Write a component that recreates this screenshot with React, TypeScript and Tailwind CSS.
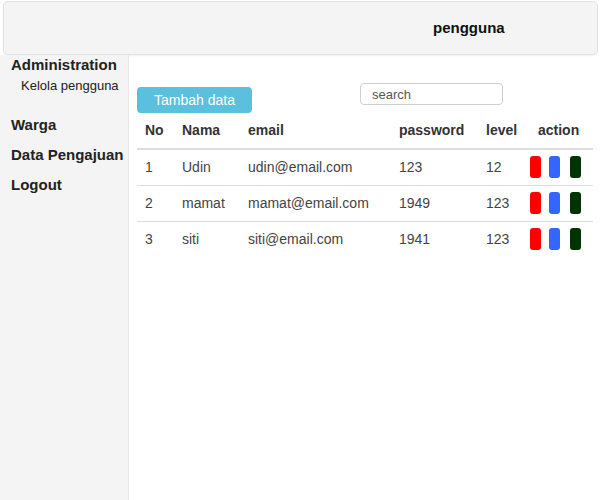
import React from 'react'

interface Pengguna {
  no: number
  nama: string
  email: string
  password: string
  level: string
}

const rows: Pengguna[] = [
  { no: 1, nama: 'Udin', email: 'udin@email.com', password: '123', level: '12' },
  { no: 2, nama: 'mamat', email: 'mamat@email.com', password: '1949', level: '123' },
  { no: 3, nama: 'siti', email: 'siti@email.com', password: '1941', level: '123' },
]

const App: React.FC = () => {
  return (
    <div className="w-[600px] h-[500px] bg-white flex flex-col font-['Liberation_Sans',Arial,sans-serif] text-[#222]">
      <header className="mt-px ml-[3px] mr-[2px] h-[54px] shrink-0 rounded-[5px] border border-[#e2e2e2] bg-[#f4f4f4] shadow-[0_1px_2px_rgba(0,0,0,0.06)] flex items-center">
        <div className="ml-[429px] text-[15px] font-bold text-[#111]">pengguna</div>
      </header>

      <div className="flex flex-1">
        <aside className="w-[129px] shrink-0 bg-[#f4f4f4] border-r border-[#e9e9e9]">
          <div className="pl-[11px] text-[15px] font-bold leading-[20px]">Administration</div>
          <div className="pl-[21px] text-[13px] leading-[20px] mt-px">Kelola pengguna</div>
          <div className="pl-[11px] text-[15px] font-bold leading-[20px] mt-[19px]">Warga</div>
          <div className="pl-[11px] text-[15px] font-bold leading-[20px] mt-[10px]">Data Pengajuan</div>
          <div className="pl-[11px] text-[15px] font-bold leading-[20px] mt-[10px]">Logout</div>
        </aside>

        <main className="flex-1 pl-[8px] pr-[7px]">
          <div className="flex items-start mt-[28px]">
            <button className="mt-[4px] h-[26px] w-[115px] rounded-[4px] bg-[#5bc0de] text-white text-[14px]">
              Tambah data
            </button>
            <input
              placeholder="search"
              className="ml-[108px] h-[22px] w-[143px] rounded-[4px] border border-[#cfcfcf] px-[11px] text-[13px] placeholder:text-[#555] outline-none"
            />
          </div>

          <table className="w-[456px] table-fixed border-collapse text-[14px]">
            <colgroup>
              <col className="w-[37px]" />
              <col className="w-[66px]" />
              <col className="w-[151px]" />
              <col className="w-[87px]" />
              <col className="w-[52px]" />
              <col className="w-[63px]" />
            </colgroup>
            <thead>
              <tr className="h-[36px] border-b-2 border-[#dddddd] text-left text-[#333]">
                <th className="pl-[8px] font-bold">No</th>
                <th className="pl-[8px] font-bold">Nama</th>
                <th className="pl-[8px] font-bold">email</th>
                <th className="pl-[8px] font-bold">password</th>
                <th className="pl-[8px] font-bold">level</th>
                <th className="pl-[8px] font-bold">action</th>
              </tr>
            </thead>
            <tbody className="text-[#444]">
              {rows.map((r, i) => (
                <tr key={r.no} className={i < rows.length - 1 ? 'h-[36px] border-b border-[#dddddd]' : 'h-[36px]'}>
                  <td className="pl-[8px]">{r.no}</td>
                  <td className="pl-[8px]">{r.nama}</td>
                  <td className="pl-[8px]">{r.email}</td>
                  <td className="pl-[8px]">{r.password}</td>
                  <td className="pl-[8px]">{r.level}</td>
                  <td>
                    <div className="flex gap-[8px]">
                      <span className="block h-[22px] w-[11px] rounded-[3px] bg-[#ff0000]" />
                      <span className="block h-[22px] w-[11px] rounded-[3px] bg-[#3366ff]" />
                      <span className="ml-[2px] block h-[22px] w-[11px] rounded-[3px] bg-[#003300]" />
                    </div>
                  </td>
                </tr>
              ))}
            </tbody>
          </table>
        </main>
      </div>
    </div>
  )
}

export default App
